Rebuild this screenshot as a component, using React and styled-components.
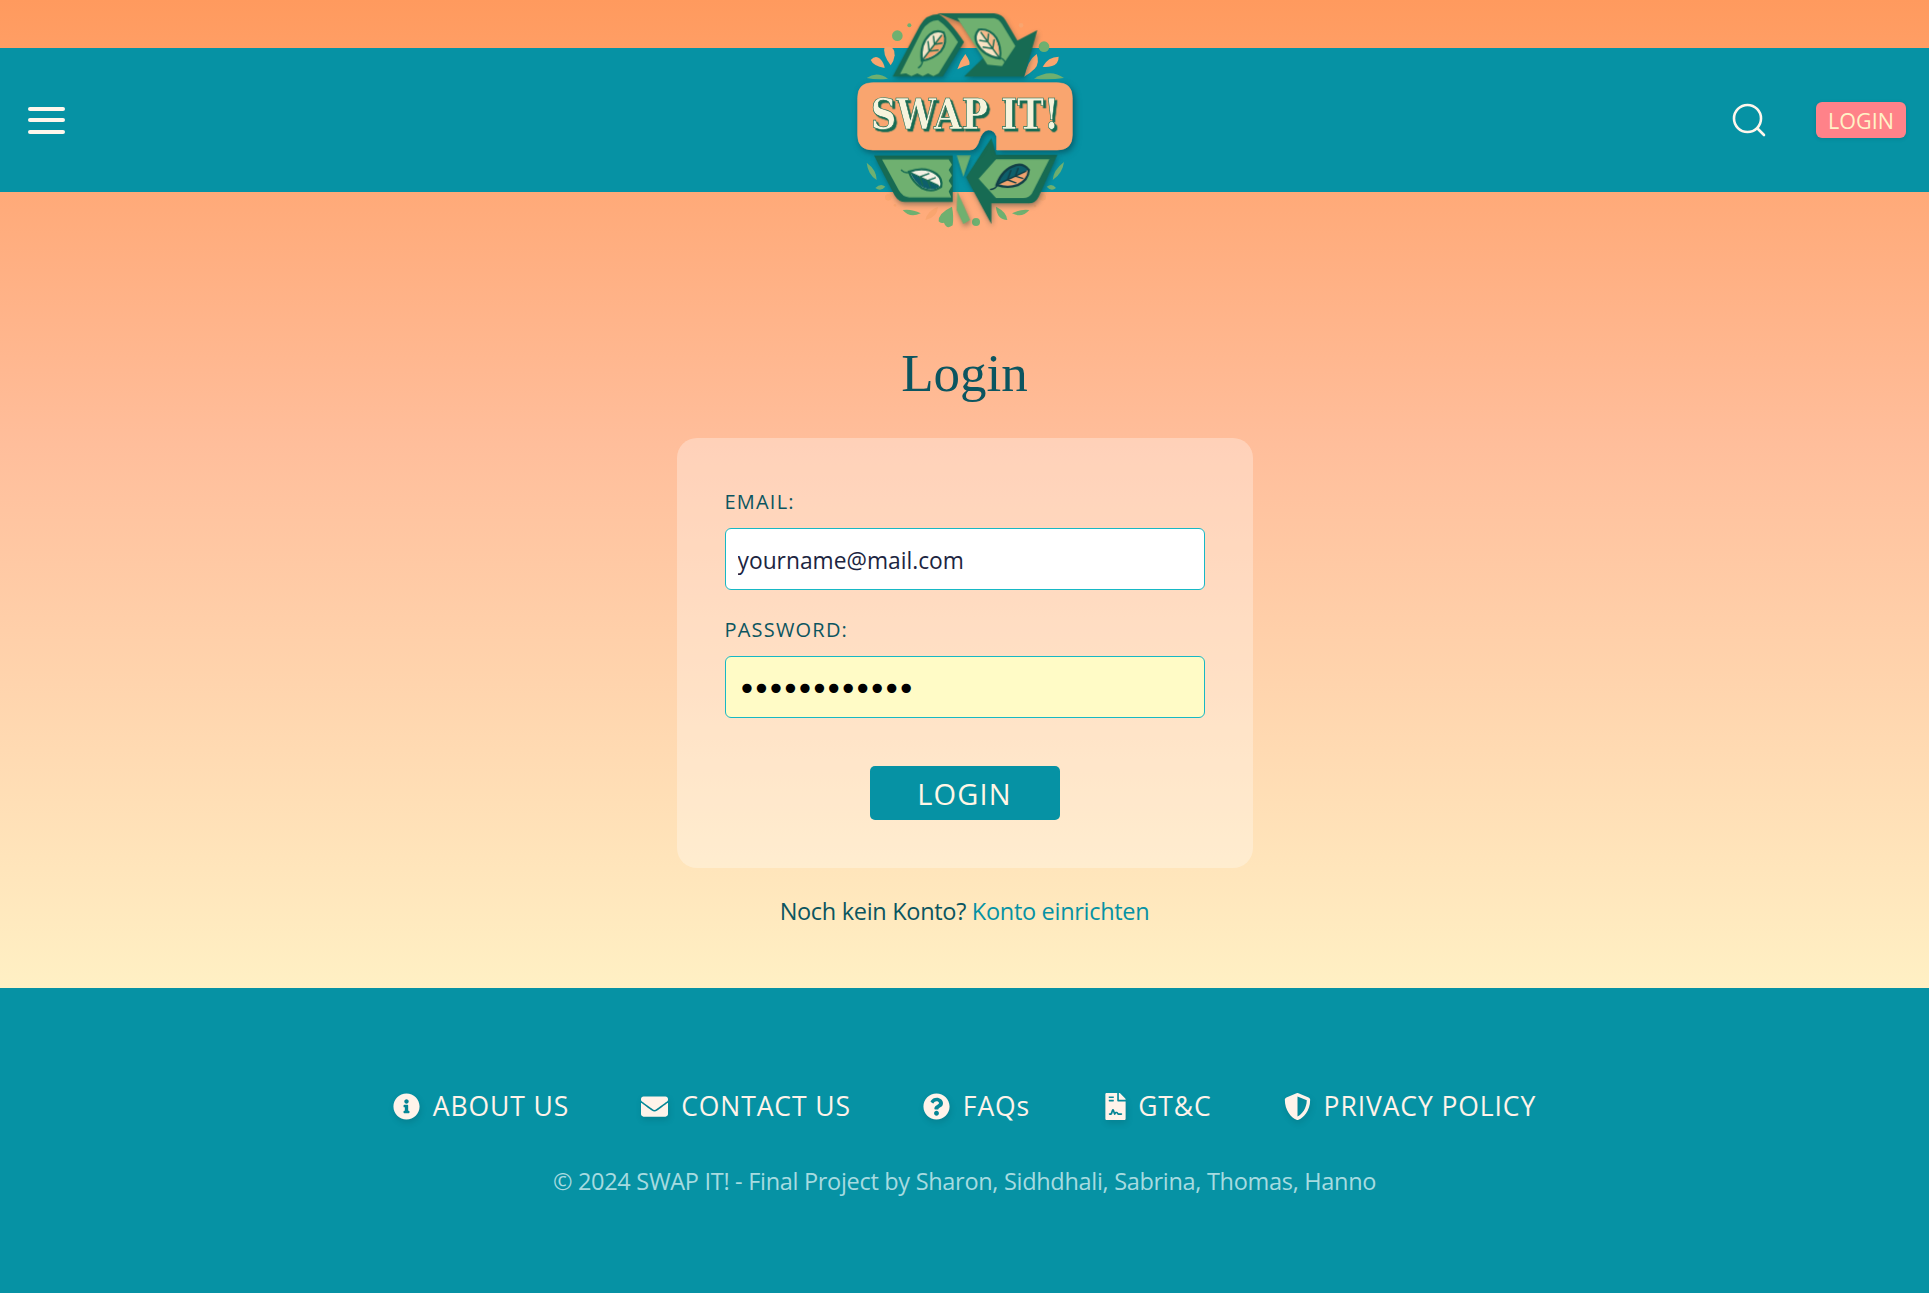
import styled, { createGlobalStyle } from "styled-components";
import { FaInfoCircle, FaEnvelope, FaQuestionCircle, FaFileContract, FaShieldAlt } from "react-icons/fa";

const GlobalStyle = createGlobalStyle`
  html, body {
    margin: 0;
    padding: 0;
    background: #0692a4;
  }
  * {
    box-sizing: border-box;
  }
  body {
    font-family: "Open Sans", "Noto Sans", sans-serif;
  }
`;

const footerLinks = [
  { label: "ABOUT US", Icon: FaInfoCircle },
  { label: "CONTACT US", Icon: FaEnvelope },
  { label: "FAQs", Icon: FaQuestionCircle },
  { label: "GT&C", Icon: FaFileContract, tight: true },
  { label: "PRIVACY POLICY", Icon: FaShieldAlt },
];

const Leaf = ({ x, y, angle, fill, accent, vein = "#176b53" }) => (
  <g transform={`translate(${x} ${y}) rotate(${angle}) scale(0.86)`}>
    <path d="M-62 0 Q-20 -42 28 -34 Q56 -28 62 0 Q44 32 4 32 Q-34 28 -62 0Z" fill={fill} stroke={vein} strokeWidth="8" />
    <path d="M-56 0 L58 0 Q42 28 4 28 Q-30 24 -56 0Z" fill={accent} />
    <path d="M-88 6 Q-72 12 -58 0 L50 0 M-20 0 L4 -24 M-20 0 L2 22 M10 0 L30 -20 M10 0 L30 18" fill="none" stroke={vein} strokeWidth="5" strokeLinecap="round" />
  </g>
);

const Logo = () => (
  <LogoSvg viewBox="0 0 870 720" aria-label="SWAP IT! logo">
    {/* small decoration round the badge */}
    <g fill="#6fb070">
      <circle cx="232" cy="107" r="16" />
      <circle cx="672" cy="140" r="16" />
      <circle cx="268" cy="76" r="6" />
      <circle cx="468" cy="666" r="12" />
      <path d="M140 234 Q170 212 204 236 Q170 240 140 234Z" />
      <path d="M642 236 Q690 204 732 234 Q690 240 642 236Z" />
      <path d="M140 488 Q170 510 170 540 Q144 524 140 488Z" />
      <path d="M732 486 Q728 520 698 540 Q700 510 732 486Z" />
      <path d="M166 564 Q182 548 196 560 Q182 576 166 564Z" />
      <path d="M680 560 Q696 548 708 564 Q694 576 680 560Z" />
      <path d="M248 630 Q276 626 302 640 Q270 656 248 630Z" />
      <path d="M576 640 Q604 626 628 630 Q606 656 576 640Z" />
      <path d="M528 620 Q560 636 562 660 Q530 658 528 620Z" />
      <path d="M356 664 Q354 640 396 620 Q402 650 398 676 Q380 690 372 668 Q362 672 356 664Z" />
    </g>
    <g fill="#f9a56f">
      <circle cx="603" cy="76" r="7" />
      <circle cx="205" cy="592" r="10" />
      <circle cx="668" cy="592" r="10" />
      <circle cx="225" cy="616" r="4" />
      <circle cx="645" cy="618" r="4" />
      <path d="M212 196 Q186 160 194 140 Q226 136 224 166 Q222 184 212 196Z" />
      <path d="M194 204 Q160 198 152 180 Q166 164 180 176 Q192 188 194 204Z" />
      <path d="M412 208 Q420 182 436 162 Q452 186 448 194 Q430 198 412 208Z" />
      <path d="M612 230 Q624 180 650 162 Q660 190 644 206 Q628 222 612 230Z" />
      <path d="M668 200 Q684 170 716 170 Q716 192 696 198 Q682 202 668 200Z" />
      <path d="M316 660 Q322 632 354 620 Q352 652 316 660Z" />
    </g>

    <Ribbons>
      {/* top left ribbon */}
      <path d="M218 230 L300 76 Q318 42 356 42 Q388 60 432 126 L368 230 Z" fill="#176b53" />
      <path d="M240 222 L306 92 Q324 60 354 60 Q384 80 414 126 L356 220 L340 228 L324 220 L308 228 L292 220 L274 228 L258 220 Z" fill="#6fb070" />
      <Leaf x={338} y={140} angle={-52} fill="#f3e5c8" accent="#f2a36f" />

      {/* top right arrow */}
      <path d="M352 40 L522 40 Q546 42 556 60 L592 122 L652 90 L612 230 L432 230 L494 170 L420 66 Z" fill="#176b53" />
      <path d="M412 54 L522 54 Q536 56 546 72 L586 138 L546 198 L502 194 Z" fill="#6fb070" />
      <Leaf x={508} y={132} angle={234} fill="#f9e3c4" accent="#f6b98a" />

      {/* bottom left ribbon */}
      <path d="M162 466 L398 466 L398 606 L256 606 Q236 606 224 586 Z" fill="#176b53" />
      <path d="M186 478 L386 478 L396 494 L386 510 L396 526 L386 542 L396 558 L386 574 L394 592 L268 592 Q248 592 236 570 Z" fill="#6fb070" />
      <Leaf x={315} y={538} angle={25} fill="#f4f1e4" accent="#0e5f6b" />

      {/* bottom right arrow */}
      <path d="M514 414 L438 532 L514 672 L514 610 L626 610 Q646 610 656 590 L712 464 L528 464 Z" fill="#176b53" />
      <path d="M528 478 L688 478 L636 580 Q628 594 610 594 L528 594 L476 536 Z" fill="#6fb070" />
      <Leaf x={578} y={532} angle={-25} fill="#0e5f6b" accent="#f2a36f" vein="#123f46" />

      {/* strip between the two lower ribbons */}
      <path d="M410 466 L452 466 L430 530 Z" fill="#6fb070" />
      <path d="M412 574 L450 660 L430 672 L410 630 Z" fill="#6fb070" />
    </Ribbons>

    <Badge d="M158 248 L712 248 Q757 248 757 293 L757 405 Q757 450 712 450 L530 450 L530 410 Q522 388 504 390 Q486 394 478 420 Q470 450 450 450 L158 450 Q113 450 113 405 L113 293 Q113 248 158 248Z" />
    <LogoText x="152" y="388" textLength="566" lengthAdjust="spacingAndGlyphs">SWAP IT!</LogoText>
  </LogoSvg>
);

const App = () => (
  <>
    <GlobalStyle />
    <Main>
      <Header>
        <MenuButton aria-label="Menu">
          <span />
          <span />
          <span />
        </MenuButton>
        <Logo />
        <HeaderActions>
          <SearchIcon viewBox="0 0 34 34" aria-label="Search">
            <circle cx="15.5" cy="15.5" r="13.5" />
            <path d="M25.5 25.5 L32 32" />
          </SearchIcon>
          <HeaderLogin>LOGIN</HeaderLogin>
        </HeaderActions>
      </Header>

      <Content>
        <Title>Login</Title>
        <Card>
          <Label htmlFor="email">EMAIL:</Label>
          <Input id="email" type="email" defaultValue="yourname@mail.com" />
          <Label htmlFor="password">PASSWORD:</Label>
          <Input id="password" type="password" defaultValue="secretsecret" $autofilled />
          <SubmitButton type="button">LOGIN</SubmitButton>
        </Card>
        <SignupText>
          Noch kein Konto? <SignupLink href="#">Konto einrichten</SignupLink>
        </SignupText>
      </Content>
    </Main>

    <Footer>
      <FooterNav>
        {footerLinks.map(({ label, Icon, tight }) => (
          <FooterLink key={label} href="#" $tight={tight}>
            <Icon />
            {label}
          </FooterLink>
        ))}
      </FooterNav>
      <Copyright>© 2024 SWAP IT! - Final Project by Sharon, Sidhdhali, Sabrina, Thomas, Hanno</Copyright>
    </Footer>
  </>
);

export default App;

const Main = styled.div`
  height: 988px;
  padding-top: 48px;
  background: linear-gradient(180deg, #ff9a5e 0%, #ffbe9b 45%, #fff0c4 100%);
`;

const Header = styled.header`
  position: relative;
  height: 144px;
  padding: 0 23px 0 28px;
  display: flex;
  align-items: center;
  justify-content: space-between;
  background: #0692a4;
`;

const MenuButton = styled.div`
  width: 37px;
  display: flex;
  flex-direction: column;
  gap: 7.5px;
  span {
    height: 4px;
    border-radius: 2px;
    background: #fff6ec;
  }
`;

const LogoSvg = styled.svg`
  position: absolute;
  left: 820px;
  top: -48px;
  width: 290px;
  height: 240px;
`;

const Ribbons = styled.g`
  filter: drop-shadow(3px 8px 8px rgba(10, 50, 50, 0.4));
`;

const Badge = styled.path`
  fill: #f9a56f;
  stroke: #f9a56f;
  stroke-width: 2;
  filter: drop-shadow(6px 8px 10px rgba(5, 60, 70, 0.6));
`;

const LogoText = styled.text`
  font-family: "DejaVu Serif", "Liberation Serif", serif;
  font-weight: 700;
  font-size: 128px;
  fill: #f6f4dd;
  stroke: #176b53;
  stroke-width: 2;
  filter: drop-shadow(7px 7px 0 #176b53);
`;

const HeaderActions = styled.div`
  display: flex;
  align-items: center;
  gap: 50px;
`;

const SearchIcon = styled.svg`
  width: 34px;
  height: 34px;
  fill: none;
  stroke: #fff6ec;
  stroke-width: 2.6;
  stroke-linecap: round;
`;

const HeaderLogin = styled.button`
  width: 90px;
  height: 36px;
  padding: 0;
  border: none;
  border-radius: 6px;
  background: #ff8289;
  color: #fff3c7;
  font-family: inherit;
  font-size: 21.5px;
  box-shadow: 0 1px 4px rgba(0, 0, 0, 0.12);
`;

const Content = styled.main`
  display: flex;
  flex-direction: column;
  align-items: center;
  padding-top: 148px;
`;

const Title = styled.h1`
  margin: 0 0 32px;
  font-family: "Liberation Serif", serif;
  font-size: 53px;
  line-height: 66px;
  font-weight: 400;
  color: #0b5560;
`;

const Card = styled.form`
  width: 576px;
  height: 430px;
  padding: 50px 48px 0;
  display: flex;
  flex-direction: column;
  border-radius: 20px;
  background: rgba(255, 255, 255, 0.3);
`;

const Label = styled.label`
  font-size: 20px;
  line-height: 28px;
  letter-spacing: 1.2px;
  color: #0b5560;
`;

const Input = styled.input`
  width: 100%;
  height: 62px;
  margin: 12px 0 26px;
  padding: ${(props) => (props.$autofilled ? "4px 12px 0" : "2px 12px 0")};
  border: 1px solid #17b8c4;
  border-radius: 6px;
  background: ${(props) => (props.$autofilled ? "#fffbc6" : "#fff")};
  color: ${(props) => (props.$autofilled ? "#000" : "#1c2541")};
  font-family: ${(props) => (props.$autofilled ? '"DejaVu Sans", sans-serif' : "inherit")};
  font-size: ${(props) => (props.$autofilled ? "32px" : "22.8px")};
  letter-spacing: ${(props) => (props.$autofilled ? "-4.4px" : "normal")};
  outline: none;
`;

const SubmitButton = styled.button`
  align-self: center;
  width: 190px;
  height: 54px;
  margin-top: 22px;
  padding: 0;
  border: none;
  border-radius: 5px;
  background: #0692a4;
  color: #fff6e6;
  font-family: inherit;
  font-size: 29px;
  letter-spacing: 1.2px;
`;

const SignupText = styled.p`
  margin: 26px 0 0;
  font-size: 23.5px;
  line-height: 34px;
  letter-spacing: -0.3px;
  color: #0b5560;
`;

const SignupLink = styled.a`
  color: #0692a4;
  text-decoration: none;
`;

const Footer = styled.footer`
  height: 305px;
  padding-top: 99px;
  display: flex;
  flex-direction: column;
  align-items: center;
  background: #0692a4;
`;

const FooterNav = styled.nav`
  display: flex;
  align-items: center;
  gap: 72px;
`;

const FooterLink = styled.a`
  display: flex;
  align-items: center;
  gap: ${(props) => (props.$tight ? "9px" : "13px")};
  color: #fff3ea;
  font-size: 26.5px;
  line-height: 38px;
  letter-spacing: 0.9px;
  text-decoration: none;
  svg {
    font-size: 27px;
    filter: drop-shadow(1px 3px 3px rgba(0, 0, 0, 0.12));
  }
`;

const Copyright = styled.p`
  margin: 39px 0 0;
  font-size: 23.5px;
  line-height: 34px;
  letter-spacing: -0.3px;
  color: #a7dbe0;
`;
